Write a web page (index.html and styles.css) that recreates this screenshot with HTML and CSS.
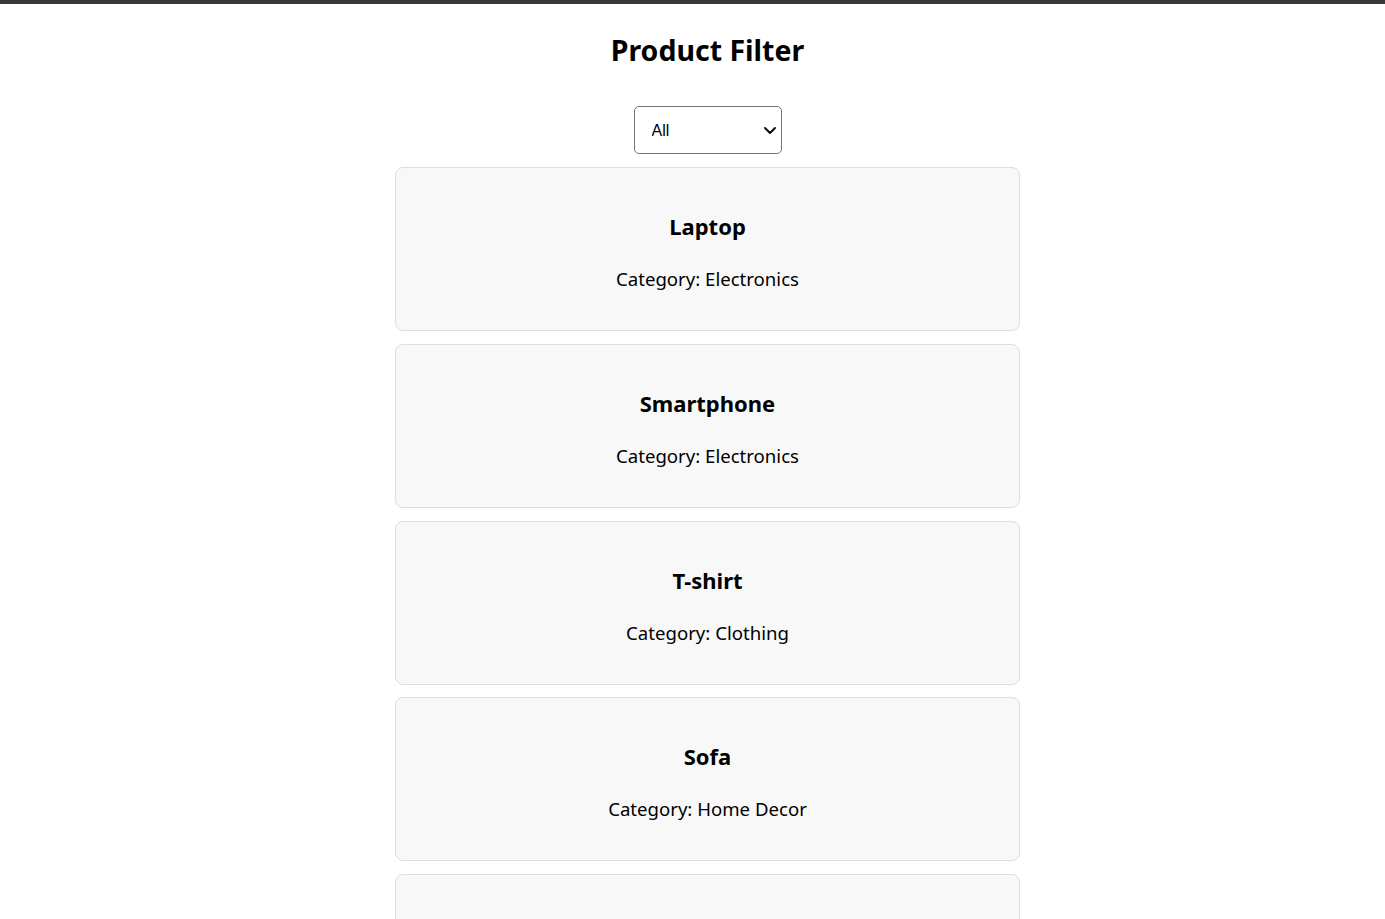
FILE: index.html
```html
<!DOCTYPE html>
<html lang="en">
<head>
<meta charset="utf-8">
<title>Product Filter</title>
<link rel="stylesheet" href="styles.css">
</head>
<body>
<div class="topbar"></div>
<main class="page">
  <h1 class="title">Product Filter</h1>
  <div class="filter">
    <select class="filter-select">
      <option>All</option>
      <option>Electronics</option>
      <option>Clothing</option>
      <option>Home Decor</option>
    </select>
    <svg class="filter-arrow" width="12" height="7" viewBox="0 0 12 7" aria-hidden="true"><path d="M1 1l5 5 5-5" fill="none" stroke="#000" stroke-width="1.8" stroke-linecap="round" stroke-linejoin="round"/></svg>
  </div>
  <div class="list">
    <div class="card"><h3 class="card-name">Laptop</h3><p class="card-cat">Category: Electronics</p></div>
    <div class="card"><h3 class="card-name">Smartphone</h3><p class="card-cat">Category: Electronics</p></div>
    <div class="card"><h3 class="card-name">T-shirt</h3><p class="card-cat">Category: Clothing</p></div>
    <div class="card"><h3 class="card-name">Sofa</h3><p class="card-cat">Category: Home Decor</p></div>
    <div class="card"><h3 class="card-name">Jeans</h3><p class="card-cat">Category: Clothing</p></div>
  </div>
</main>
</body>
</html>
```
FILE: styles.css
```css
html, body {
  margin: 0;
  padding: 0;
  background: #ffffff;
}
body {
  font-family: "Noto Sans", "Open Sans", sans-serif;
  color: #000;
  overflow: hidden;
}
.topbar {
  height: 4px;
  background: #38383b;
}
.page {
  padding-left: 30px;
  display: flex;
  flex-direction: column;
  align-items: center;
}
.title {
  margin: 29px 0 0;
  font-size: 28.5px;
  line-height: 34px;
  font-weight: 700;
}
.filter {
  position: relative;
  margin-top: 39px;
  height: 48px;
}
.filter-select {
  -webkit-appearance: none;
  appearance: none;
  width: 148px;
  height: 48px;
  padding: 0 30px 0 17px;
  font: 16px "Liberation Sans", Arial, sans-serif;
  color: #000;
  background: #fff;
  border: 1px solid #767676;
  border-radius: 5px;
}
.filter-arrow {
  position: absolute;
  left: 130px;
  top: 21px;
  pointer-events: none;
}
.list {
  margin-top: 13px;
  display: flex;
  flex-direction: column;
  gap: 12.75px;
}
.card {
  width: 583px;
  padding: 20px;
  background: #f8f8f8;
  border: 1px solid #dddddd;
  border-radius: 8px;
  text-align: center;
}
.card-name {
  margin: 23px 0 24px;
  font-size: 22px;
  line-height: 30px;
  font-weight: 700;
}
.card-cat {
  margin: 0 0 17px;
  font-size: 18.6px;
  line-height: 28px;
  color: #000;
}
```
